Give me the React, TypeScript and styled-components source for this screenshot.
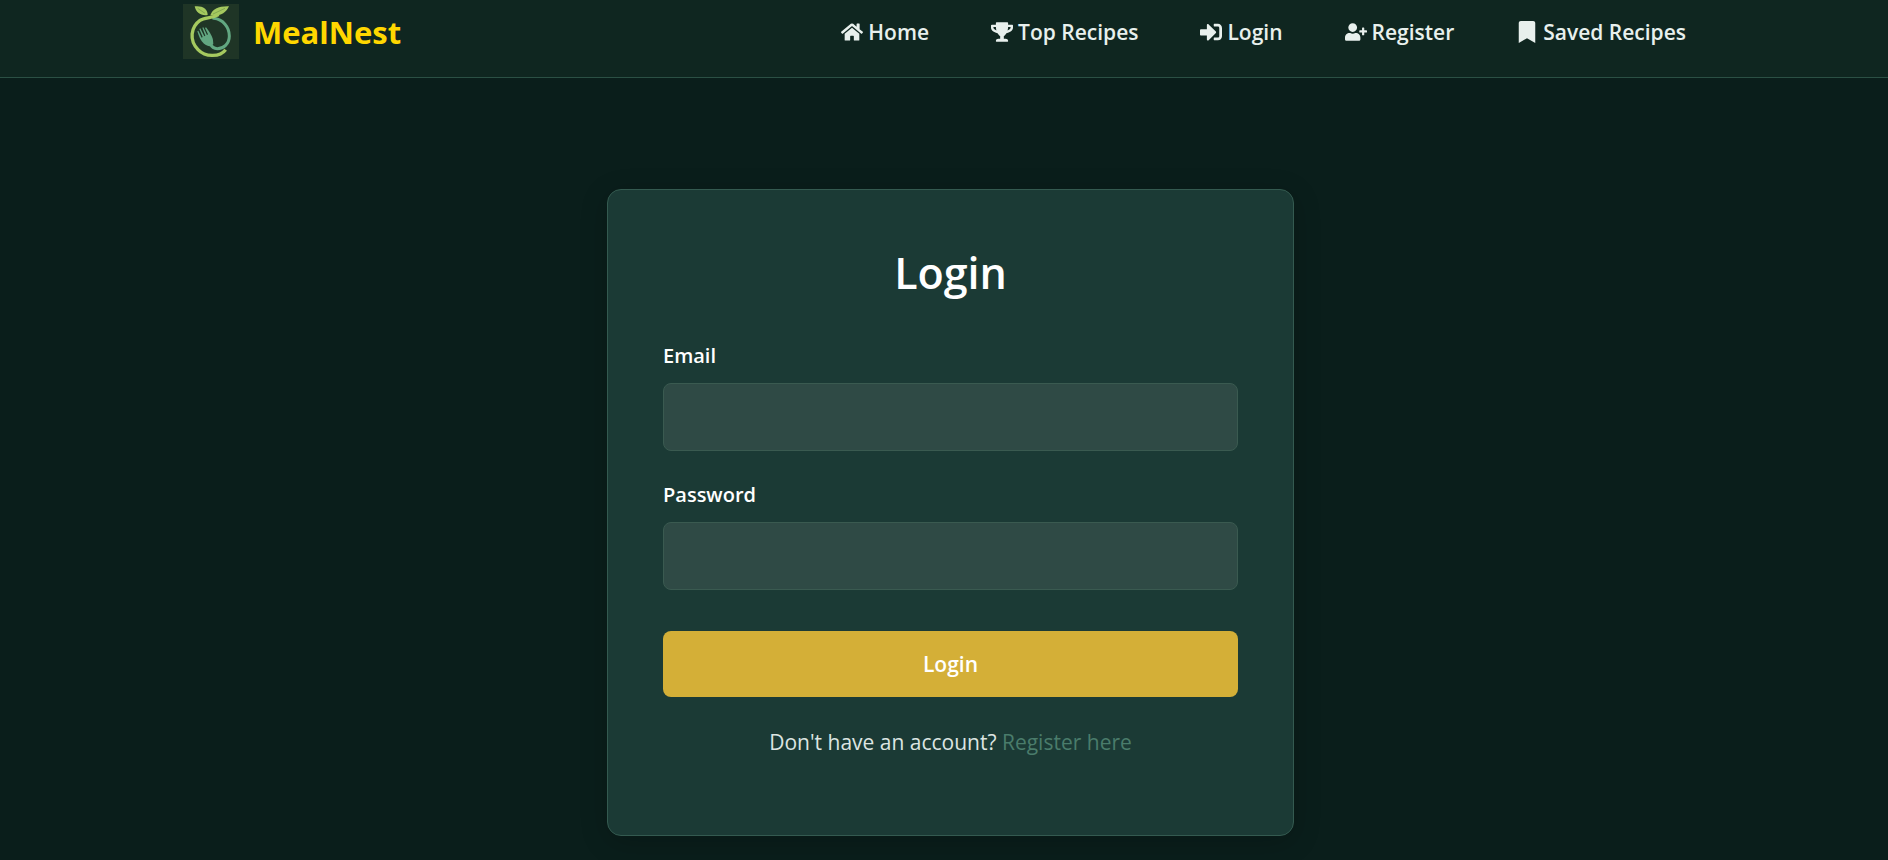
import React from "react";
import styled, { createGlobalStyle } from "styled-components";
import { FaBookmark, FaHome, FaSignInAlt, FaTrophy, FaUserPlus } from "react-icons/fa";

const GlobalStyle = createGlobalStyle`
  *, *::before, *::after { box-sizing: border-box; }
  body {
    margin: 0;
    background: #0a1e1b;
    color: #ffffff;
    font-family: "Segoe UI", "Open Sans", sans-serif;
    font-size: 21px;
    line-height: 32px;
  }
`;

const Page = styled.div`
  display: flex;
  flex-direction: column;
  min-height: 100vh;
`;

const Header = styled.header`
  padding: 0 171px 0 183px;
  background: #0f2620;
  border-bottom: 1px solid #2b5044;
`;

const HeaderInner = styled.div`
  display: flex;
  align-items: flex-start;
  justify-content: space-between;
  height: 77px;
`;

const Brand = styled.a`
  display: flex;
  align-items: center;
  gap: 14px;
  height: 63px;
  color: #ffd700;
  font-size: 31px;
  font-weight: 700;
  text-decoration: none;
`;

const Nav = styled.nav`
  display: flex;
  height: 63px;
`;

const NavLink = styled.a`
  display: flex;
  align-items: center;
  gap: 5px;
  padding: 0 31px;
  color: #e8f0ed;
  font-weight: 600;
  text-decoration: none;
  white-space: nowrap;

  svg { width: 22px; height: 22px; }
`;

const Main = styled.main`
  display: flex;
  justify-content: center;
  padding: 111px 0 24px 13px;
`;

const Card = styled.section`
  width: 100%;
  max-width: 687px;
  padding: 55px;
  background: #1b3a35;
  border: 1px solid #345a50;
  border-radius: 14px;
  box-shadow: 0 6px 28px rgba(0, 0, 0, 0.2);
`;

const Title = styled.h1`
  margin: 0 0 39px;
  font-size: 43px;
  font-weight: 600;
  line-height: 56px;
  text-align: center;
`;

const Field = styled.div`
  display: flex;
  flex-direction: column;
  gap: 11px;
  margin-bottom: 28px;
`;

const Label = styled.label`
  font-size: 20px;
  font-weight: 600;
`;

const Input = styled.input`
  width: 100%;
  height: 68px;
  padding: 16px 22px;
  color: #ffffff;
  font: inherit;
  background: #2f4a45;
  border: 1px solid #3a5a50;
  border-radius: 8px;
`;

const Submit = styled.button`
  width: 100%;
  height: 66px;
  margin-top: 13px;
  color: #ffffff;
  font: inherit;
  font-weight: 600;
  background: #d4af37;
  border: 0;
  border-radius: 8px;
`;

const Footnote = styled.p`
  margin: 29px 0 22px;
  color: #dde5e2;
  text-align: center;
`;

const TextLink = styled.a`
  color: #4a7c6b;
  font-weight: 500;
  text-decoration: none;
`;

function Logo() {
  return (
    <svg width="56" height="55" viewBox="0 0 168 165" aria-hidden="true">
      <rect width="168" height="165" fill="#1f3526" />
      <path d="M92 43 C120 46 139 69 139 96 C139 120 121 134 103 134 C93 134 86 129 82 119" fill="none" stroke="#62a781" strokeWidth="9" strokeLinecap="round" />
      <path d="M128 137 C112 158 69 162 45 137 C18 109 23 69 51 49 C66 38 84 45 107 32" fill="none" stroke="#a5c95f" strokeWidth="10" />
      <path d="M35 7 C57 4 74 14 74 33 C53 36 39 26 35 7Z" fill="#a5c95f" />
      <path d="M138 7 C107 6 88 15 82 34 C109 38 129 28 138 7Z" fill="#a5c95f" />
      <path d="M44 13 L66 28 M126 13 L90 30" stroke="#6f9648" strokeWidth="2" />
      <path d="M43 82 C48 98 53 111 63 119 C71 126 78 126 83 127 L91 120 C90 112 91 105 86 96 C81 86 75 78 69 70 L66 72 L75 91 L72 93 L61 70 L58 71 L67 95 L64 97 L52 73 L49 75 L59 99 L56 101 L46 80Z" fill="#62a781" />
    </svg>
  );
}

const links = [
  { label: "Home", Icon: FaHome },
  { label: "Top Recipes", Icon: FaTrophy },
  { label: "Login", Icon: FaSignInAlt },
  { label: "Register", Icon: FaUserPlus },
  { label: "Saved Recipes", Icon: FaBookmark },
];

export default function App() {
  return (
    <Page>
      <GlobalStyle />
      <Header>
        <HeaderInner>
          <Brand href="#">
            <Logo />
            MealNest
          </Brand>
          <Nav>
            {links.map(({ label, Icon }) => (
              <NavLink key={label} href="#">
                <Icon aria-hidden="true" />
                {label}
              </NavLink>
            ))}
          </Nav>
        </HeaderInner>
      </Header>
      <Main>
        <Card>
          <Title>Login</Title>
          <form>
            <Field>
              <Label htmlFor="email">Email</Label>
              <Input id="email" type="email" />
            </Field>
            <Field>
              <Label htmlFor="password">Password</Label>
              <Input id="password" type="password" />
            </Field>
            <Submit type="submit">Login</Submit>
          </form>
          <Footnote>
            Don't have an account? <TextLink href="#">Register here</TextLink>
          </Footnote>
        </Card>
      </Main>
    </Page>
  );
}
